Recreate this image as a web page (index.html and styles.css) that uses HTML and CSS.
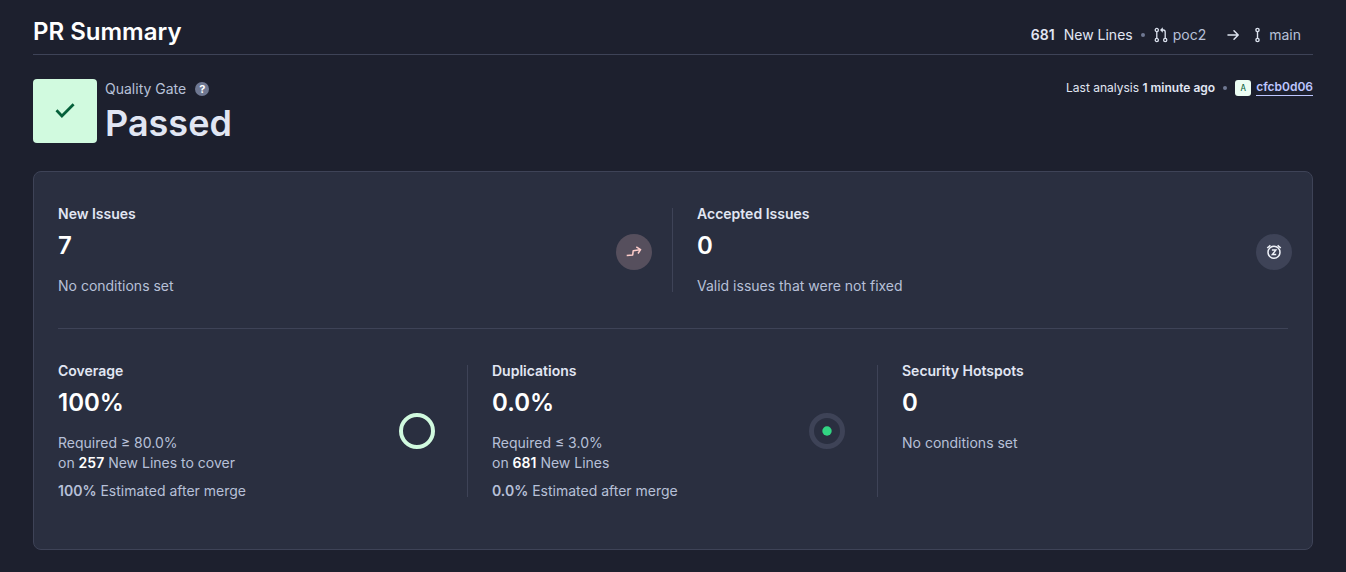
FILE: index.html
```html
<!DOCTYPE html>
<html lang="en">
<head>
<meta charset="utf-8">
<title>PR Summary</title>
<link rel="stylesheet" href="styles.css">
</head>
<body>
<main class="page">
  <header class="page-header">
    <h1 class="page-title">PR Summary</h1>
    <div class="pr-meta">
      <span class="new-lines"><strong>681</strong><span>New Lines</span></span>
      <span class="dot"></span>
      <span class="branch">
        <svg class="icon" viewBox="0 0 16 16" aria-hidden="true"><g fill="none" stroke="currentColor" stroke-width="1.3"><circle cx="3.8" cy="3" r="1.6"/><circle cx="3.8" cy="13" r="1.6"/><circle cx="12.2" cy="13" r="1.6"/><path d="M3.8 4.600v6.800M12.200 11.400V5a2 2 0 0 0-2-2H8"/></g><path fill="currentColor" d="M9.800 .3v5.400L7 3z"/></svg>
        <span>poc2</span>
      </span>
      <svg class="icon arrow" viewBox="0 0 16 16" aria-hidden="true"><path fill="none" stroke="currentColor" stroke-width="1.500" stroke-linecap="round" stroke-linejoin="round" d="M3 8h10M9 3.800 13.200 8 9 12.200"/></svg>
      <span class="branch">
        <svg class="icon" viewBox="0 0 16 16" aria-hidden="true"><g fill="none" stroke="currentColor" stroke-width="1.400"><circle cx="8.500" cy="3" r="1.600"/><circle cx="8.500" cy="13" r="1.600"/><path d="M8.500 4.600v6.800"/></g></svg>
        <span>main</span>
      </span>
    </div>
  </header>

  <section class="status">
    <div class="status-box">
      <svg viewBox="0 0 24 24" aria-hidden="true"><path fill="none" stroke="currentColor" stroke-width="2.800" d="M3.500 11.300 8.900 16.900 20.600 5.300"/></svg>
    </div>
    <div class="gate">
      <div class="gate-label">Quality Gate <button class="help" type="button" aria-label="About the quality gate">?</button></div>
      <div class="gate-value">Passed</div>
    </div>
    <div class="analysis">
      <span>Last analysis <strong>1 minute ago</strong></span>
      <span class="dot"></span>
      <span class="author"><span class="avatar">A</span><a class="commit" href="#">cfcb0d06</a></span>
    </div>
  </section>

  <section class="card">
    <div class="issues">
      <article class="measure">
        <div class="measure-text">
          <h2 class="measure-title">New Issues</h2>
          <p class="measure-value">7</p>
          <p>No conditions set</p>
        </div>
        <svg class="figure" viewBox="0 0 36 36" aria-hidden="true"><circle cx="18" cy="18" r="18" fill="#564f5d"/><path fill="none" stroke="#fecdca" stroke-width="1.500" stroke-linejoin="round" d="M10.700 21.600 16.700 20.900 17.200 16.800 24 15.700M20.300 12.900 24.600 15.600 22 19.500"/></svg>
      </article>
      <article class="measure">
        <div class="measure-text">
          <h2 class="measure-title">Accepted Issues</h2>
          <p class="measure-value">0</p>
          <p>Valid issues that were not fixed</p>
        </div>
        <svg class="figure" viewBox="0 0 36 36" aria-hidden="true"><circle cx="18" cy="18" r="18" fill="#3e4357"/><g fill="none" stroke="#eff2f9" stroke-width="1.500"><circle cx="18" cy="18.300" r="6"/><path d="M11.200 14l3.200-2.600M24.800 14l-3.200-2.600M15.900 16.100h3.900l-3.400 4.400H20.200"/></g></svg>
      </article>
    </div>
    <div class="metrics">
      <article class="measure">
        <div class="measure-text">
          <h2 class="measure-title">Coverage</h2>
          <p class="measure-value">100%</p>
          <p>Required ≥ 80.0%</p>
          <p>on <strong class="bright">257</strong> New Lines to cover</p>
          <p class="estimate"><strong>100%</strong> Estimated after merge</p>
        </div>
        <svg class="figure" viewBox="0 0 36 36" aria-hidden="true"><circle cx="18" cy="18" r="16" fill="none" stroke="#d1fadf" stroke-width="4"/></svg>
      </article>
      <article class="measure">
        <div class="measure-text">
          <h2 class="measure-title">Duplications</h2>
          <p class="measure-value">0.0%</p>
          <p>Required ≤ 3.0%</p>
          <p>on <strong class="bright">681</strong> New Lines</p>
          <p class="estimate"><strong>0.0%</strong> Estimated after merge</p>
        </div>
        <svg class="figure" viewBox="0 0 36 36" aria-hidden="true"><circle cx="18" cy="18" r="15.500" fill="none" stroke="#3e4357" stroke-width="5"/><circle cx="18" cy="18" r="4.700" fill="#32d583"/></svg>
      </article>
      <article class="measure">
        <div class="measure-text">
          <h2 class="measure-title">Security Hotspots</h2>
          <p class="measure-value">0</p>
          <p>No conditions set</p>
        </div>
      </article>
    </div>
  </section>
</main>
</body>
</html>
```
FILE: styles.css
```css
:root {
  --page: #1d202e;
  --surface: #2a2f40;
  --line: #3e4357;
  --text: #b7c0d8;
  --text-strong: #e1e6f3;
}

* {
  box-sizing: border-box;
}

body {
  margin: 0;
  background: var(--page);
  color: var(--text);
  font: 400 14px/20px Inter, sans-serif;
}

h1,
h2,
p {
  margin: 0;
}

strong {
  font-weight: 600;
}

.page {
  padding: 16px 33px 22px;
}

.page-header {
  display: flex;
  align-items: center;
  justify-content: space-between;
  padding-bottom: 6px;
  border-bottom: 1px solid var(--line);
}

.page-title {
  color: #fff;
  font-size: 24px;
  font-weight: 600;
  line-height: 32px;
}

.pr-meta {
  display: flex;
  align-items: center;
  gap: 8px;
  padding: 6px 12px 0 0;
}

.new-lines {
  display: flex;
  gap: 9px;
  color: var(--text-strong);
}

.dot {
  width: 4px;
  height: 4px;
  border-radius: 50%;
  background: #6f7892;
}

.branch {
  display: flex;
  align-items: center;
  gap: 4px;
}

.icon {
  width: 16px;
  height: 16px;
  color: #dde3f0;
}

.arrow {
  margin-left: 11px;
}

.status {
  display: flex;
  gap: 8px;
  padding: 24px 0;
}

.status-box {
  display: grid;
  place-items: center;
  width: 64px;
  height: 64px;
  border-radius: 4px;
  background: #d1fadf;
  color: #05603a;
}

.status-box svg {
  width: 24px;
  height: 24px;
}

.gate-label {
  display: flex;
  align-items: center;
  gap: 9px;
}

.help {
  width: 14px;
  height: 14px;
  padding: 0;
  border: 0;
  border-radius: 50%;
  background: #6f7892;
  color: #fff;
  font: 700 11px/14px Inter, sans-serif;
  text-align: center;
}

.gate-value {
  color: var(--text-strong);
  font-size: 36px;
  font-weight: 600;
  line-height: 48px;
}

.analysis {
  display: flex;
  align-items: center;
  gap: 8px;
  height: 18px;
  margin-left: auto;
  color: var(--text-strong);
  font-size: 12px;
  line-height: 18px;
}

.author {
  display: flex;
  align-items: center;
  gap: 5px;
}

.avatar {
  width: 16px;
  height: 16px;
  border-radius: 3px;
  background: #ecfdf3;
  color: #05603a;
  font: 400 9px/16px "DejaVu Sans Mono", monospace;
  text-align: center;
}

.commit {
  padding-bottom: 1px;
  border-bottom: 1px solid #bdc6ff;
  color: #bdc6ff;
  font-weight: 600;
  line-height: 14px;
  text-decoration: none;
}

.card {
  border: 1px solid var(--line);
  border-radius: 8px;
  background: var(--surface);
}

.issues {
  display: grid;
  grid-template-columns: repeat(2, 1fr);
  padding: 32px 0;
}

.metrics {
  display: grid;
  grid-template-columns: repeat(3, 1fr);
  margin: 0 24px;
  padding: 32px 0 48px;
  border-top: 1px solid var(--line);
}

.measure {
  position: relative;
  display: flex;
  align-items: center;
  justify-content: space-between;
  padding: 0 33px 0 24px;
}

.issues .measure {
  padding-right: 20px;
}

.issues .measure:first-child {
  padding-right: 21px;
}

.metrics .measure:first-child {
  padding-left: 0;
}

.measure:not(:last-child)::after {
  position: absolute;
  top: 4px;
  right: 0;
  bottom: 4px;
  width: 1px;
  background: var(--line);
  content: "";
}

.measure-text {
  align-self: flex-start;
}

.measure-title {
  color: var(--text-strong);
  font-size: 14px;
  font-weight: 600;
}

.measure-value {
  margin: 6px 0 14px;
  color: #fff;
  font-size: 24px;
  font-weight: 600;
  line-height: 32px;
}

.estimate {
  margin-top: 8px;
}

.bright {
  color: #fff;
}

.figure {
  flex: none;
  width: 36px;
  height: 36px;
}

.issues .figure {
  margin-top: 4px;
}
```
